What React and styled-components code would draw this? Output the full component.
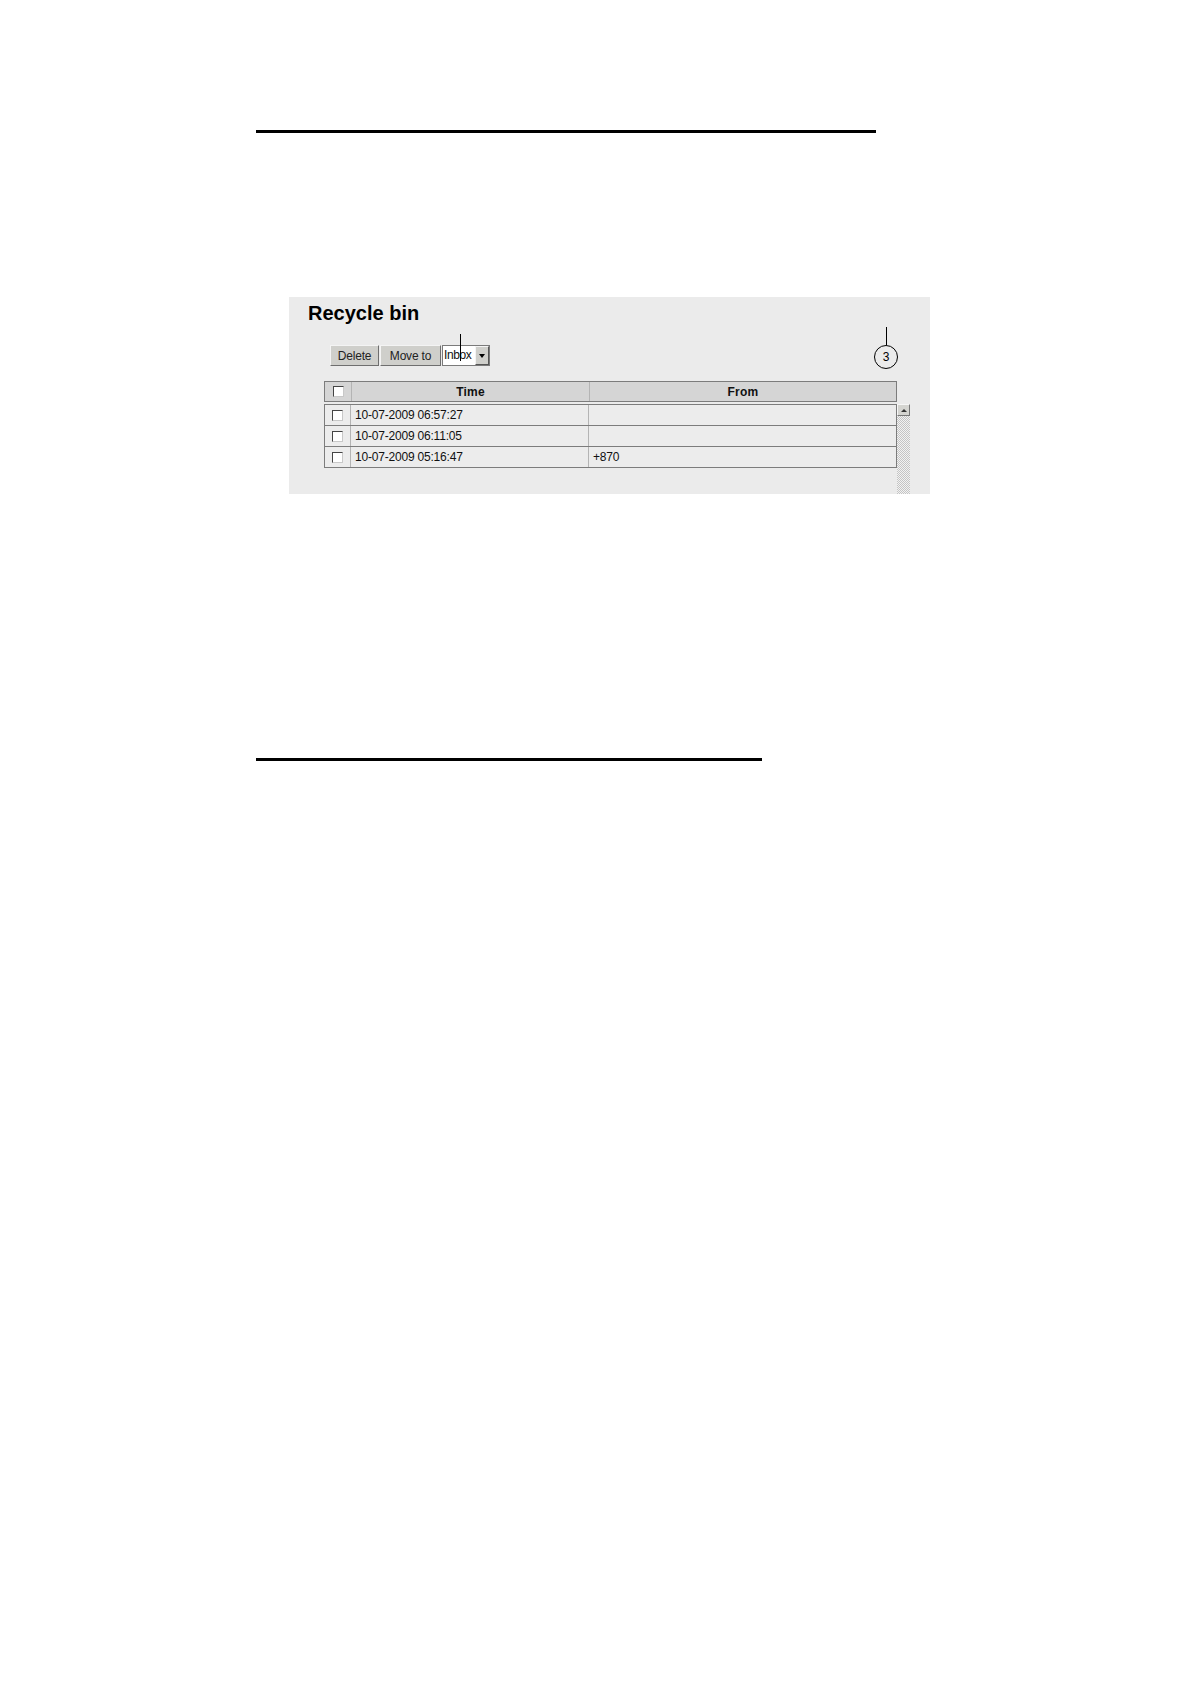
import React from 'react'
import styled, { createGlobalStyle } from 'styled-components'

const GlobalStyle = createGlobalStyle`
  html, body {
    margin: 0;
    padding: 0;
    background: #ffffff;
  }
  body {
    font-family: "Liberation Sans", Arial, sans-serif;
    color: #000;
  }
`

const rows = [
  { time: '10-07-2009 06:57:27', from: '' },
  { time: '10-07-2009 06:11:05', from: '' },
  { time: '10-07-2009 05:16:47', from: '+870' },
]

const Page = styled.div`
  width: 1190px;
  height: 1684px;
  box-sizing: border-box;
  padding-top: 130px;
  display: flex;
  flex-direction: column;
`

const Rule = styled.div`
  width: ${p => p.$width}px;
  height: 3px;
  background: #000;
  margin-left: 256px;
  margin-top: ${p => p.$top || 0}px;
`

const Panel = styled.section`
  position: relative;
  width: 641px;
  height: 197px;
  margin-left: 289px;
  margin-top: 164px;
  background: #ebebeb;
  display: flex;
  flex-direction: column;
  box-sizing: border-box;
`

const Title = styled.h1`
  margin: 5px 0 0 19px;
  font-size: 20px;
  line-height: 23px;
  font-weight: bold;
  letter-spacing: 0;
`

const Toolbar = styled.div`
  display: flex;
  align-items: center;
  margin: 20px 0 0 41px;
  height: 21px;
`

const Button = styled.button`
  height: 21px;
  width: ${p => p.$w}px;
  padding: 0;
  margin-right: 1px;
  background: #cfcfcb;
  border: 1px solid;
  border-color: #f4f4f4 #6e6e6e #6e6e6e #f4f4f4;
  font-family: "Liberation Sans", Arial, sans-serif;
  font-size: 12px;
  letter-spacing: -0.2px;
  color: #222;
`

const Select = styled.div`
  display: flex;
  align-items: stretch;
  height: 19px;
  width: 46px;
  border: 1px solid #7a7a7a;
  background: #fff;
  box-sizing: content-box;
`

const SelectText = styled.span`
  flex: 1;
  font-size: 12px;
  line-height: 19px;
  letter-spacing: -0.4px;
  padding-left: 1px;
  color: #111;
`

const SelectArrow = styled.span`
  width: 12px;
  background: #cfcfcb;
  border: 1px solid;
  border-color: #f4f4f4 #555 #555 #f4f4f4;
  display: flex;
  align-items: center;
  justify-content: center;
  &::after {
    content: '';
    border-left: 3px solid transparent;
    border-right: 3px solid transparent;
    border-top: 4px solid #000;
  }
`

const TableArea = styled.div`
  flex: 1;
  display: flex;
  margin: 15px 0 0 35px;
`

const Table = styled.div`
  width: 573px;
  align-self: flex-start;
  display: flex;
  flex-direction: column;
`

const HeaderRow = styled.div`
  display: grid;
  grid-template-columns: 27px 238px 1fr;
  height: 21px;
  box-sizing: border-box;
  border: 1px solid #7c7c7c;
  background: #d5d5d5;
  margin-bottom: 2px;
`

const Body = styled.div`
  border: 1px solid #7c7c7c;
  border-bottom: 0;
`

const Row = styled.div`
  display: grid;
  grid-template-columns: 26px 238px 1fr;
  height: 20px;
  border-bottom: 1px solid #7c7c7c;
  background: #ececec;
`

const Cell = styled.div`
  display: flex;
  align-items: center;
  justify-content: ${p => (p.$center ? 'center' : 'flex-start')};
  padding-left: ${p => (p.$center ? 0 : 4)}px;
  border-right: ${p => (p.$last ? 0 : '1px solid #b4b4b4')};
  font-size: 12px;
  font-weight: ${p => (p.$head ? 'bold' : 'normal')};
  letter-spacing: ${p => (p.$head ? '0.2px' : '-0.2px')};
  color: #111;
`

const Check = styled.span`
  width: 9px;
  height: 9px;
  background: #fff;
  border: 1px solid;
  border-color: #444 #c8c8c8 #c8c8c8 #444;
`

const ScrollCol = styled.div`
  width: 13px;
  margin-top: 23px;
  display: flex;
  flex-direction: column;
  background-color: #f2f2f2;
  background-image: repeating-conic-gradient(#c4c4c4 0 25%, #f2f2f2 0 50%);
  background-size: 2px 2px;
`

const ScrollUp = styled.div`
  height: 12px;
  box-sizing: border-box;
  background: #d4d4d0;
  border: 1px solid;
  border-color: #f6f6f6 #777 #777 #f6f6f6;
  display: flex;
  align-items: center;
  justify-content: center;
  &::after {
    content: '';
    border-left: 3px solid transparent;
    border-right: 3px solid transparent;
    border-bottom: 3px solid #333;
  }
`

const Leader = styled.div`
  position: absolute;
  left: ${p => p.$x}px;
  top: ${p => p.$y}px;
  width: 1px;
  height: ${p => p.$h}px;
  background: #000;
`

const Callout = styled.div`
  position: absolute;
  left: 585px;
  top: 48px;
  width: 22px;
  height: 22px;
  border: 1px solid #000;
  border-radius: 50%;
  display: flex;
  align-items: center;
  justify-content: center;
  font-size: 12px;
  background: transparent;
`

export default function App() {
  return (
    <Page>
      <GlobalStyle />
      <Rule $width={620} />
      <Panel>
        <Title>Recycle bin</Title>
        <Toolbar>
          <Button $w={49}>Delete</Button>
          <Button $w={61}>Move to</Button>
          <Select>
            <SelectText>Inbox</SelectText>
            <SelectArrow />
          </Select>
        </Toolbar>
        <TableArea>
          <Table>
            <HeaderRow>
              <Cell $center $head><Check /></Cell>
              <Cell $center $head>Time</Cell>
              <Cell $center $head $last>From</Cell>
            </HeaderRow>
            <Body>
              {rows.map(r => (
                <Row key={r.time}>
                  <Cell $center><Check /></Cell>
                  <Cell>{r.time}</Cell>
                  <Cell $last>{r.from}</Cell>
                </Row>
              ))}
            </Body>
          </Table>
          <ScrollCol>
            <ScrollUp />
          </ScrollCol>
        </TableArea>
        <Leader $x={171} $y={37} $h={27} />
        <Leader $x={597} $y={30} $h={18} />
        <Callout>3</Callout>
      </Panel>
      <Rule $width={506} $top={264} />
    </Page>
  )
}
